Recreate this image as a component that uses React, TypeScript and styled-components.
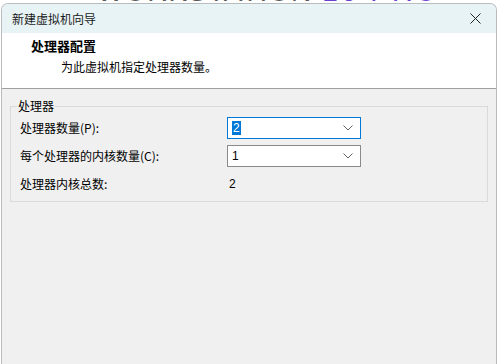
import React from 'react';
import styled, { createGlobalStyle } from 'styled-components';

const GlobalStyle = createGlobalStyle`
  html, body {
    margin: 0;
    padding: 0;
    background: #ffffff;
    height: 100%;
    overflow: hidden;
  }
  #root {
    height: 100%;
  }
`;

const FONT = `"Microsoft YaHei UI", "Noto Sans CJK SC", "Noto Sans", sans-serif`;

const Page = styled.div`
  display: flex;
  flex-direction: column;
  height: 364px;
  width: 498px;
  font-family: ${FONT};
  color: #000;
`;

/* only the bottom edge of the app banner behind the dialog shows */
const Backdrop = styled.div`
  display: block;
  flex: 0 0 3px;
  height: 3px;
  overflow: hidden;
  background: #ffffff;
`;

const BrandLine = styled.div`
  margin-top: -19px;
  padding-left: 97px;
  font-family: "Liberation Sans", sans-serif;
  font-size: 28px;
  line-height: 22px;
  height: 22px;
  letter-spacing: 1px;
  white-space: nowrap;
`;

const BrandGray = styled.span`
  color: #5a5a5a;
`;

const BrandPurple = styled.span`
  color: #6b3fd0;
  margin-left: 10px;
  letter-spacing: 3px;
`;

const Window = styled.div`
  flex: 1;
  display: flex;
  flex-direction: column;
  margin: 0 1px;
  border: 1px solid #b9bcbf;
  border-bottom: none;
  border-radius: 7px 7px 0 0;
  overflow: hidden;
  background: #f0f0f0;
`;

const TitleBar = styled.div`
  height: 29px;
  display: flex;
  align-items: center;
  justify-content: space-between;
  padding: 0 8px 0 10px;
  background: #e8f3f6;
`;

const TitleText = styled.span`
  font-size: 12px;
  color: #1a1a1a;
`;

const CloseButton = styled.button`
  width: 30px;
  height: 29px;
  display: flex;
  align-items: center;
  justify-content: center;
  border: none;
  background: none;
  padding: 0;
  margin-right: -2px;
`;

const Header = styled.div`
  display: flex;
  flex-direction: column;
  background: #ffffff;
  border-bottom: 1px solid #a0a0a0;
  padding: 4px 0 0 29px;
  box-sizing: border-box;
  height: 56px;
`;

const Heading = styled.div`
  font-size: 13px;
  font-weight: 700;
  line-height: 17px;
`;

const SubHeading = styled.div`
  font-size: 12px;
  line-height: 17px;
  margin: 4px 0 0 30px;
`;

const Body = styled.div`
  padding: 9px 8px 0 8px;
`;

const Group = styled.fieldset`
  margin: 0;
  border: 1px solid #dadada;
  padding: 0 0 3px 9px;
  min-width: 0;
`;

const Legend = styled.legend`
  font-size: 12px;
  line-height: 16px;
  padding: 0 1px;
  margin-left: -3px;
`;

const Rows = styled.div`
  display: grid;
  grid-template-columns: 207px 134px;
  grid-auto-rows: 28px;
  align-items: center;
`;

const Label = styled.span`
  font-size: 12px;
  line-height: 16px;
`;

const Select = styled.div<{ focused?: boolean }>`
  height: 22px;
  box-sizing: border-box;
  display: flex;
  align-items: center;
  justify-content: space-between;
  background: #ffffff;
  border: 1px solid ${p => (p.focused ? '#0078d7' : '#8a8a8a')};
  padding: 0 7px 0 4px;
  font-family: "Liberation Sans", sans-serif;
  font-size: 12px;
`;

const Selected = styled.span`
  background: #0078d7;
  color: #ffffff;
  padding: 0 1px;
  line-height: 14px;
`;

const Value = styled.span`
  font-family: "Liberation Sans", sans-serif;
  font-size: 12px;
  padding-left: 2px;
`;

const Chevron = () => (
  <svg width="10" height="6" viewBox="0 0 10 6" fill="none">
    <path d="M0.5 0.5L5 5L9.5 0.5" stroke="#606060" strokeWidth="1" />
  </svg>
);

const App: React.FC = () => {
  return (
    <Page>
      <GlobalStyle />
      <Backdrop>
        <BrandLine>
          <BrandGray>WORKSTATION</BrandGray>
          <BrandPurple>16 PRO</BrandPurple>
        </BrandLine>
      </Backdrop>
      <Window>
        <TitleBar>
          <TitleText>新建虚拟机向导</TitleText>
          <CloseButton>
            <svg width="11" height="11" viewBox="0 0 11 11" fill="none">
              <path d="M0.5 0.5L10.5 10.5M10.5 0.5L0.5 10.5" stroke="#222" strokeWidth="1" />
            </svg>
          </CloseButton>
        </TitleBar>
        <Header>
          <Heading>处理器配置</Heading>
          <SubHeading>为此虚拟机指定处理器数量。</SubHeading>
        </Header>
        <Body>
          <Group>
            <Legend>处理器</Legend>
            <Rows>
              <Label>处理器数量(P):</Label>
              <Select focused>
                <Selected>2</Selected>
                <Chevron />
              </Select>
              <Label>每个处理器的内核数量(C):</Label>
              <Select>
                <span>1</span>
                <Chevron />
              </Select>
              <Label>处理器内核总数:</Label>
              <Value>2</Value>
            </Rows>
          </Group>
        </Body>
      </Window>
    </Page>
  );
};

export default App;
